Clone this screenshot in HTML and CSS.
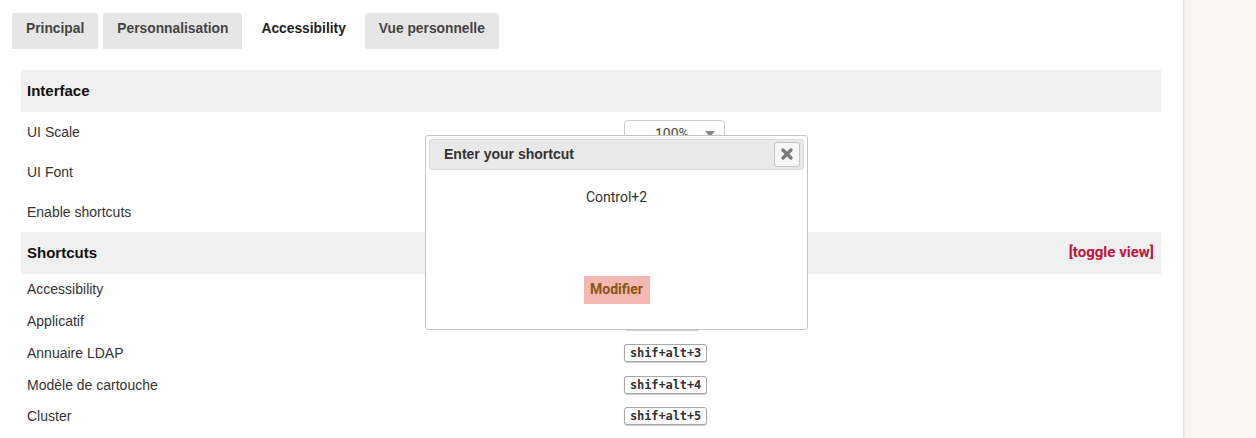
FILE: index.html
```html
<!DOCTYPE html>
<html lang="fr">
<head>
<meta charset="utf-8">
<title>Accessibility</title>
<link rel="stylesheet" href="styles.css">
</head>
<body>
<div class="page">
  <main class="main">
    <nav class="tabs">
      <span class="tab">Principal</span>
      <span class="tab">Personnalisation</span>
      <span class="tab active">Accessibility</span>
      <span class="tab">Vue personnelle</span>
    </nav>
    <section class="panel">
      <div class="head"><span>Interface</span></div>
      <div class="row tall">
        <span class="label">UI Scale</span>
        <span class="value"><span class="select"><span class="sel-text">100%</span><span class="caret"></span></span></span>
      </div>
      <div class="row tall"><span class="label">UI Font</span><span class="value"></span></div>
      <div class="row tall"><span class="label">Enable shortcuts</span><span class="value"></span></div>
      <div class="head"><span>Shortcuts</span><a class="toggle">[toggle view]</a></div>
      <div class="row"><span class="label">Accessibility</span><span class="value"><kbd class="key">shif+alt+1</kbd></span></div>
      <div class="row"><span class="label">Applicatif</span><span class="value"><kbd class="key">Control+2</kbd></span></div>
      <div class="row"><span class="label">Annuaire LDAP</span><span class="value"><kbd class="key">shif+alt+3</kbd></span></div>
      <div class="row"><span class="label">Modèle de cartouche</span><span class="value"><kbd class="key">shif+alt+4</kbd></span></div>
      <div class="row"><span class="label">Cluster</span><span class="value"><kbd class="key">shif+alt+5</kbd></span></div>
    </section>

    <div class="dialog">
      <div class="dialog-title">
        <span>Enter your shortcut</span>
        <button class="close" type="button" aria-label="close">
          <svg width="12" height="12" viewBox="0 0 12 12"><path d="M2 2 L10 10 M10 2 L2 10" stroke="#7a7a7a" stroke-width="3.2" stroke-linecap="round"/></svg>
        </button>
      </div>
      <div class="dialog-body">
        <div class="combo">Control+2</div>
        <button class="modify" type="button">Modifier</button>
      </div>
    </div>
  </main>
  <aside class="side"></aside>
</div>
</body>
</html>
```

FILE: styles.css
```css
html, body {
  margin: 0;
  padding: 0;
  height: 100%;
  overflow: hidden;
}
body {
  font-family: "Liberation Sans", Arial, sans-serif;
  font-size: 14px;
  color: #333;
  background: #f7f6f3;
}
.page {
  display: flex;
  height: 438px;
}
.main {
  position: relative;
  width: 1184px;
  flex: none;
  background: #fff;
  border-right: 1px solid #e2e2e2;
  box-shadow: 1px 0 2px rgba(0,0,0,0.06);
  box-sizing: border-box;
}
.side {
  flex: 1;
  background: #f7f6f3;
}
.tabs {
  display: flex;
  gap: 5px;
  padding: 13px 0 0 12px;
}
.tab {
  font-weight: bold;
  font-size: 13.8px;
  line-height: 16px;
  color: #444;
  background: #e6e6e6;
  padding: 8px 14px 12px;
  border-radius: 3px 3px 0 0;
}
.tab.active {
  background: transparent;
  color: #222;
}
.panel {
  margin: 21px 22px 0 21px;
}
.head {
  display: flex;
  align-items: center;
  justify-content: space-between;
  height: 42px;
  box-sizing: border-box;
  background: #f0f0f0;
  padding: 0 7px 1px 6px;
  font-weight: bold;
  font-size: 15px;
  color: #111;
}
.toggle {
  font-family: Roboto, "Liberation Sans", sans-serif;
  font-weight: bold;
  font-size: 15px;
  color: #c0143c;
  margin-top: -2px;
}
.row {
  display: flex;
  align-items: center;
  height: 31.75px;
  padding-bottom: 1px;
  box-sizing: border-box;
}
.row.tall {
  height: 40px;
}
.label {
  width: 597px;
  padding-left: 6px;
  flex: none;
}
.value {
  display: flex;
  align-items: center;
}
.select {
  display: flex;
  align-items: center;
  justify-content: space-between;
  box-sizing: border-box;
  width: 101px;
  height: 28px;
  margin-top: 4px;
  border: 1px solid #ccc;
  border-radius: 4px;
  padding: 0 9px 0 30px;
  font-family: Roboto, "Liberation Sans", sans-serif;
  color: #444;
}
.caret {
  width: 0;
  height: 0;
  border-left: 5px solid transparent;
  border-right: 5px solid transparent;
  border-top: 6px solid #888;
}
.key {
  font-family: "DejaVu Sans Mono", monospace;
  font-weight: bold;
  font-size: 12px;
  line-height: 16px;
  color: #333;
  padding: 0 5px 0 5px;
  letter-spacing: -0.1px;
  border: 1px solid #a8a8a8;
  border-radius: 3px;
  box-shadow: 0 1px 1px rgba(0,0,0,0.2);
  background: #fff;
}
.dialog {
  position: absolute;
  left: 425px;
  top: 135px;
  width: 383px;
  height: 195px;
  box-sizing: border-box;
  background: #fff;
  border: 1px solid #c5c5c5;
  border-radius: 3px;
  padding: 3px;
  display: flex;
  flex-direction: column;
}
.dialog-title {
  display: flex;
  align-items: center;
  justify-content: space-between;
  height: 31px;
  box-sizing: border-box;
  background: #e9e9e9;
  border: 1px solid #dddddd;
  border-radius: 3px;
  padding: 0 3px 1px 14px;
  font-weight: bold;
  font-size: 14px;
  color: #333;
}
.close {
  width: 26px;
  height: 25px;
  box-sizing: border-box;
  border: 1px solid #c5c5c5;
  border-radius: 3px;
  background: #f6f6f6;
  padding: 0;
  display: flex;
  align-items: center;
  justify-content: center;
}
.dialog-body {
  flex: 1;
  display: flex;
  flex-direction: column;
  align-items: center;
  padding-top: 19px;
}
.combo {
  font-family: Roboto, "Liberation Sans", sans-serif;
  font-size: 14px;
  line-height: 16px;
  color: #333;
}
.modify {
  margin-top: 71px;
  height: 28px;
  width: 66px;
  padding: 0 0 2px;
  border: none;
  background: #f4b8b3;
  color: #8a5612;
  font-family: Roboto, "Liberation Sans", sans-serif;
  font-weight: bold;
  font-size: 14px;
}
```
